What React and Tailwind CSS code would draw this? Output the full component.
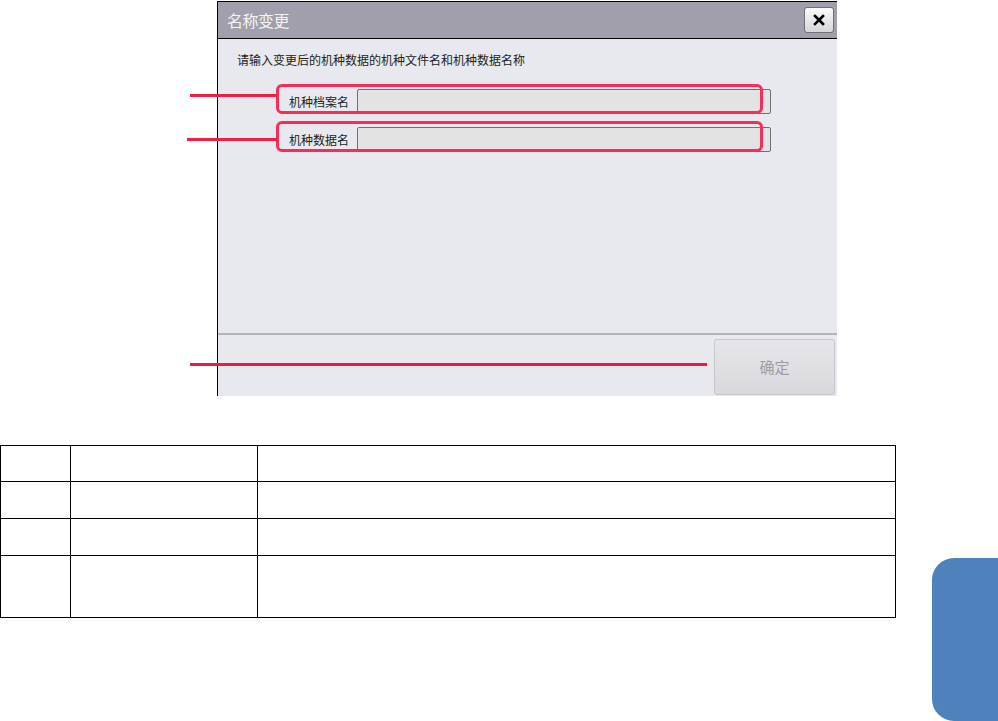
export default function App() {
  const cjk = { fontFamily: '"Noto Sans CJK SC", "Noto Sans", sans-serif' };

  return (
    <div className="relative w-[998px] h-[721px] bg-white overflow-hidden" style={cjk}>
      {/* dialog */}
      <div className="ml-[217px] mt-px w-[620px] h-[395px] flex flex-col border-t border-l border-black bg-[#e8e9ee]">
        <div className="h-[37px] flex items-center justify-between pl-[9px] pr-[3px] bg-[#a09fab] border-b border-black">
          <span className="text-[16px] leading-none text-[#f4f4f6] tracking-[-0.5px]">名称变更</span>
          <button className="w-[30px] h-[26px] flex items-center justify-center rounded-[3px] border border-[#6e6e74] bg-gradient-to-b from-[#fafafa] to-[#d6d6da]">
            <svg width="12" height="12" viewBox="0 0 12 12">
              <path d="M2 2 L10 10 M10 2 L2 10" stroke="#000" strokeWidth="2.6" strokeLinecap="square" />
            </svg>
          </button>
        </div>

        <div className="flex-1 pt-[13px] pl-[19px]">
          <p className="text-[12px] leading-4 text-[#222]">请输入变更后的机种数据的机种文件名和机种数据名称</p>
          <div className="mt-[21px] ml-[52px] flex flex-col gap-[13px]">
            <div className="flex items-center">
              <span className="w-[68px] text-[12px] text-[#222]">机种档案名</span>
              <div className="w-[414px] h-[25px] rounded-[2px] border border-[#707070] bg-[#e3e3e3]" />
            </div>
            <div className="flex items-center">
              <span className="w-[68px] text-[12px] text-[#222]">机种数据名</span>
              <div className="w-[414px] h-[25px] rounded-[2px] border border-[#707070] bg-[#e3e3e3]" />
            </div>
          </div>
        </div>

        <div className="h-[63px] border-t-2 border-[#b4b4b8] flex justify-end items-start pt-[4px] pr-[2px]">
          <button className="w-[121px] h-[56px] rounded-[3px] border border-[#c6c6cb] bg-gradient-to-b from-[#e6e6ea] to-[#d8d8dd] text-[15px] text-[#9d9d9f]">
            确定
          </button>
        </div>
      </div>

      {/* table + side tab */}
      <div className="mt-[49px] flex items-start">
        <table className="w-[896px] border-collapse">
          <tbody>
            <tr className="h-[36px]">
              <td className="w-[70px] border border-black"></td>
              <td className="w-[187px] border border-black"></td>
              <td className="border border-black"></td>
            </tr>
            <tr className="h-[37px]">
              <td className="border border-black"></td>
              <td className="border border-black"></td>
              <td className="border border-black"></td>
            </tr>
            <tr className="h-[37px]">
              <td className="border border-black"></td>
              <td className="border border-black"></td>
              <td className="border border-black"></td>
            </tr>
            <tr className="h-[62px]">
              <td className="border border-black"></td>
              <td className="border border-black"></td>
              <td className="border border-black"></td>
            </tr>
          </tbody>
        </table>
        <div className="ml-auto mt-[113px] w-[66px] h-[163px] rounded-l-[22px] bg-[#4f81bd]" />
      </div>

      {/* callout annotations */}
      <div className="absolute left-[276px] top-[84px] w-[487px] h-[30px] rounded-[6px] border-[3px] border-[#f42d5a]" />
      <div className="absolute left-[276px] top-[121px] w-[487px] h-[31px] rounded-[6px] border-[3px] border-[#f42d5a]" />
      <div className="absolute left-[190px] top-[94px] w-[87px] h-[3px] bg-[#f01d44]" />
      <div className="absolute left-[187px] top-[138px] w-[90px] h-[3px] bg-[#f01d44]" />
      <div className="absolute left-[190px] top-[363px] w-[517px] h-[3px] bg-[#f01a40]" />
    </div>
  );
}
